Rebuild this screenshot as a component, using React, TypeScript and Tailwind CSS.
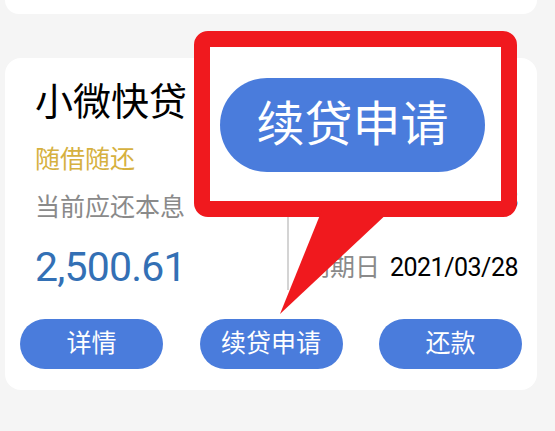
const Pill = ({ text }: { text: string }) => (
  <div className="flex h-[50px] w-[143px] items-center justify-center rounded-full bg-[#4a7cdc] text-[25px] leading-[30px] text-white">
    {text}
  </div>
);

export default function App() {
  return (
    <div className="relative h-[431px] w-[555px] overflow-hidden bg-[#f5f5f5] font-['Roboto','Noto_Sans_CJK_SC',sans-serif]">
      {/* previous card, scrolled off */}
      <div className="ml-[5px] h-[14px] w-[532px] rounded-b-2xl bg-white" />

      {/* loan card */}
      <div className="ml-[5px] mt-[44px] h-[332px] w-[532px] rounded-2xl bg-white px-[15px] pt-[20px]">
        <div className="pl-[15px] pr-[4px]">
          <div className="text-[38px] leading-[48px] text-black">小微快贷</div>
          <div className="mt-[19px] text-[25px] leading-[30px] text-[#d6b13f]">随借随还</div>
          <div className="mt-[18px] flex">
            <div className="w-[252px]">
              <div className="text-[25px] leading-[30px] text-[#8a8a8a]">当前应还本息</div>
              <div className="mt-[21px] text-[41px] leading-[46px] tracking-[-0.8px] text-[#3370b5]">2,500.61</div>
            </div>
            <div className="flex flex-1 flex-col items-end border-l-2 border-[#d4d4d4]">
              <div className="-mt-[8px] flex items-center gap-[10px] text-[25px] leading-[30px]">
                <span className="text-[#8a8a8a]">起贷日</span>
                <span className="tracking-[-0.5px] text-black">2020/03/28</span>
              </div>
              <div className="mt-[38px] flex items-center gap-[10px] text-[25px] leading-[30px]">
                <span className="text-[#8a8a8a]">到期日</span>
                <span className="tracking-[-0.5px] text-black">2021/03/28</span>
              </div>
            </div>
          </div>
        </div>

        {/* actions */}
        <div className="mt-[29px] flex justify-between">
          <Pill text="详情" />
          <Pill text="续贷申请" />
          <Pill text="还款" />
        </div>
      </div>

      {/* callout annotation */}
      <div className="absolute left-[194px] top-[31px] h-[186px] w-[323px] rounded-[14px] border-[16px] border-[#f0191e] bg-white pl-[10px] pt-[31px]">
        <div className="flex h-[94px] w-[265px] items-center justify-center rounded-full bg-[#4a7cdc] text-[48px] leading-[56px] text-white">
          续贷申请
        </div>
      </div>
      <svg className="absolute left-0 top-0" width="555" height="431">
        <polygon points="322,210 391,210 280,314" fill="#f0191e" />
      </svg>
    </div>
  );
}
